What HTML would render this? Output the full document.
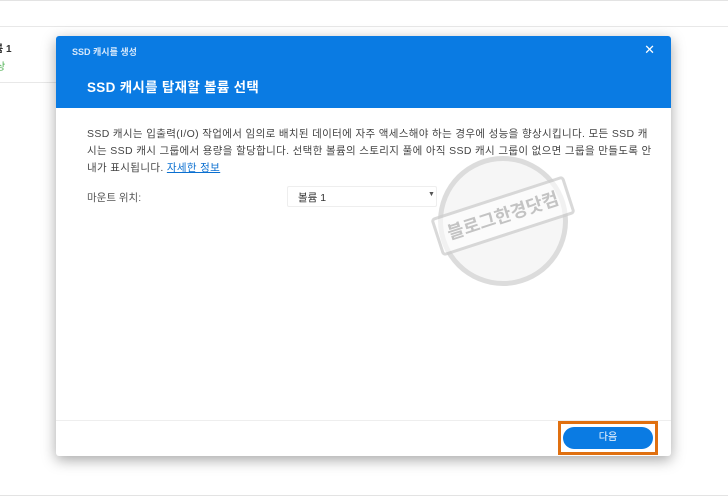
<!DOCTYPE html>
<html><head><meta charset="utf-8"><style>
*{margin:0;padding:0;box-sizing:border-box}
body{width:728px;height:496px;background:#fff;position:relative;overflow:hidden;font-family:"Liberation Sans","Noto Sans CJK KR",sans-serif;color:#333}
.abs{position:absolute}
</style></head><body>
<div class="abs" style="left:0;top:0;width:728px;height:1px;background:#e3e3e3"></div>
<div class="abs" style="left:0;top:26px;width:728px;height:1px;background:#e8e8e8"></div>
<div class="abs" style="left:0;top:82px;width:56px;height:1px;background:#e8e8e8"></div>
<div class="abs" style="left:-6px;top:40px;font-size:10px;font-weight:bold;color:#333">륨 1</div>
<div class="abs" style="left:-4px;top:58px;font-size:10px;color:#4caf50">상</div>
<div class="abs" style="left:0;top:495px;width:728px;height:1px;background:#e3e3e3"></div>
<div class="abs" style="left:56px;top:36px;width:615px;height:420px;background:#fff;border-radius:3px;box-shadow:0 4px 14px rgba(0,0,0,.35);overflow:hidden">
  <div class="abs" style="left:0;top:0;width:615px;height:72px;background:#0a7be3"></div>
  <div class="abs" style="left:16px;top:9px;font-size:9px;color:#d6e8fb;font-weight:bold">SSD 캐시를 생성</div>
  <div class="abs" style="right:16px;top:6px;font-size:13px;color:#fff">✕</div>
  <div class="abs" style="left:31px;top:40px;font-size:13.5px;color:#fff;font-weight:bold;letter-spacing:0.3px">SSD 캐시를 탑재할 볼륨 선택</div>
  <div class="abs" style="left:31px;top:90px;width:600px;font-size:10.5px;line-height:17px;color:#444;white-space:nowrap;letter-spacing:0.35px">SSD 캐시는 입출력(I/O) 작업에서 임의로 배치된 데이터에 자주 액세스해야 하는 경우에 성능을 향상시킵니다. 모든 SSD 캐<br>시는 SSD 캐시 그룹에서 용량을 할당합니다. 선택한 볼륨의 스토리지 풀에 아직 SSD 캐시 그룹이 없으면 그룹을 만들도록 안<br>내가 표시됩니다. <span style="color:#0a6fd0;text-decoration:underline">자세한 정보</span></div>
  <div class="abs" style="left:31px;top:154px;font-size:10.5px;color:#555">마운트 위치:</div>
  <div class="abs" style="left:231px;top:150px;width:150px;height:21px;border:1px solid #eee;border-radius:2px;font-size:10.5px;padding:3px 0 0 10px;color:#333">볼륨 1</div>
  <div class="abs" style="left:372px;top:155px;font-size:7px;color:#555">▼</div>
  <div class="abs" style="left:382px;top:120px;width:130px;height:130px;border-radius:50%;border:5px solid rgba(160,160,160,.3);background:rgba(210,210,210,.2)"></div>
  <div class="abs" style="left:377px;top:160px;width:140px;height:40px;transform:rotate(-18deg);background:rgba(255,255,255,.6);border:3px solid rgba(160,160,160,.4);border-radius:4px;font-size:18px;font-weight:bold;color:rgba(140,140,140,.5);text-align:center;line-height:34px">블로그한경닷컴</div>
  <div class="abs" style="left:0;top:384px;width:615px;height:1px;background:#eee"></div>
  <div class="abs" style="left:502px;top:385px;width:100px;height:34px;border:3px solid #e07010"></div>
  <div class="abs" style="left:507px;top:391px;width:90px;height:22px;border-radius:11px;background:#0a7be3;color:#fff;font-size:10px;text-align:center;line-height:22px">다음</div>
</div>
</body></html>
